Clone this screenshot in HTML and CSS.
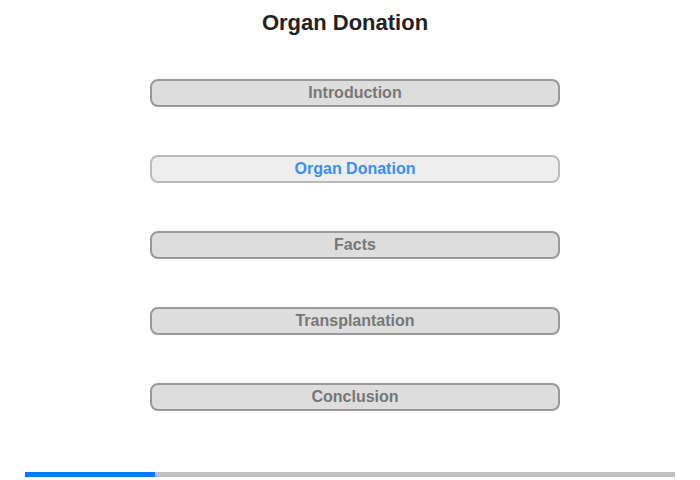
FILE: index.html
```html
<!DOCTYPE html>
<html>
<head>
    <meta charset="UTF-8">
    <title>Organ Donation</title>
    <link rel="stylesheet" href="styles.css">
</head>
<body>
    <h1 class="title">Organ Donation</h1>

    <div class="menu">
        <div class="item">Introduction</div>
        <div class="item active">Organ Donation</div>
        <div class="item">Facts</div>
        <div class="item">Transplantation</div>
        <div class="item">Conclusion</div>
    </div>

    <div class="progress">
        <div class="progress-fill" style="width: 20%;"></div>
    </div>
</body>
</html>
```

FILE: styles.css
```css
body {
    font-family: "Liberation Sans", Arial, sans-serif;
    margin: 0;
    width: 700px;
    height: 480px;
    position: relative;
}
.title {
    margin: 0;
    padding: 10px 10px 0 0;
    height: 70px;
    box-sizing: border-box;
    text-align: center;
    font-size: 22px;
    font-weight: bold;
    color: #222;
}
.menu {
    display: flex;
    flex-direction: column;
    align-items: center;
    gap: 48px;
    padding: 9px 0 0 10px;
}
.item {
    width: 410px;
    height: 28px;
    box-sizing: border-box;
    border: 2px solid #999;
    border-radius: 8px;
    background: #ddd;
    color: #777;
    font-size: 16px;
    font-weight: bold;
    text-align: center;
    line-height: 23px;
}
.item.active {
    background: #eee;
    border-color: #bbb;
    color: #3a8ef6;
}
.progress {
    position: absolute;
    left: 25px;
    top: 472px;
    width: 650px;
    height: 5px;
    background: #c0c0c0;
}
.progress-fill {
    height: 100%;
    background: #007bff;
}
```
